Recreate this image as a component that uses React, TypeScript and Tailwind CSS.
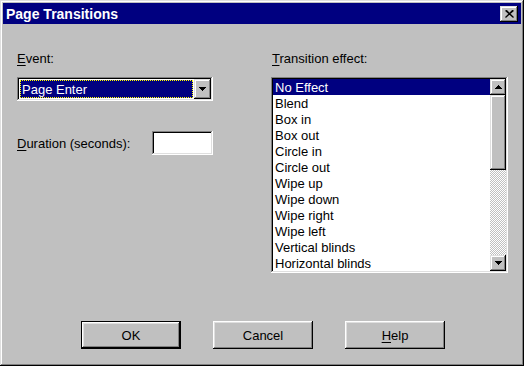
import { useState } from "react";

const raised =
  "shadow-[inset_-1px_-1px_#000,inset_1px_1px_#dfdfdf,inset_-2px_-2px_#808080,inset_2px_2px_#fff]";
const sunken =
  "shadow-[inset_-1px_-1px_#fff,inset_1px_1px_#808080,inset_-2px_-2px_#dfdfdf,inset_2px_2px_#000]";

const effects = [
  "No Effect",
  "Blend",
  "Box in",
  "Box out",
  "Circle in",
  "Circle out",
  "Wipe up",
  "Wipe down",
  "Wipe right",
  "Wipe left",
  "Vertical blinds",
  "Horizontal blinds",
];

function Arrow({ up }: { up?: boolean }) {
  return (
    <svg width="7" height="4" viewBox="0 0 7 4" className={up ? "rotate-180" : ""}>
      <path d="M0 0h7v1h-1v1h-1v1h-1v1h-1v-1h-1v-1h-1v-1h-1z" fill="#000" />
    </svg>
  );
}

function Btn({ children, primary }: { children: React.ReactNode; primary?: boolean }) {
  return (
    <button
      className={
        "w-[100px] h-[28px] bg-[#c0c0c0] text-[13px] text-black flex items-center justify-center " +
        (primary
          ? "border border-black shadow-[inset_-1px_-1px_#000,inset_1px_1px_#fff,inset_-2px_-2px_#808080,inset_2px_2px_#dfdfdf]"
          : "shadow-[inset_-1px_-1px_#000,inset_1px_1px_#fff,inset_-2px_-2px_#808080,inset_2px_2px_#dfdfdf]")
      }
    >
      {children}
    </button>
  );
}

export default function App() {
  const [selected, setSelected] = useState(0);

  return (
    <div
      className={
        "w-[524px] h-[366px] bg-[#c0c0c0] p-[3px] flex flex-col text-black font-['Liberation_Sans',Arial,sans-serif] select-none " +
        "shadow-[inset_-1px_-1px_#000,inset_1px_1px_#dfdfdf,inset_-2px_-2px_#808080,inset_2px_2px_#fff]"
      }
    >
      {/* title bar */}
      <div className="h-[21px] bg-[#000080] flex items-center justify-between pl-[3px] pr-[3px]">
        <span className="text-white font-bold text-[14px] leading-none">Page Transitions</span>
        <button className={"w-[18px] h-[16px] bg-[#c0c0c0] flex items-center justify-center " + raised}>
          <svg width="9" height="8" viewBox="0 0 9 8">
            <path d="M0.5 0.5l8 7M8.5 0.5l-8 7M1.5 0.5l7 7M7.5 0.5l-7 7" stroke="#000" strokeWidth="1.2" />
          </svg>
        </button>
      </div>

      {/* body */}
      <div className="flex flex-col pl-[14px] pt-[27px] text-[13px] leading-[15px]">
        <div className="flex">
          <div className="w-[196px] flex flex-col">
            <div className="h-[15px]">
              <span className="underline underline-offset-2">E</span>vent:
            </div>
            <div className={"mt-[11px] h-[24px] p-[2px] bg-white flex " + sunken}>
              <div className="flex-1 p-px">
                <div className="h-full bg-[#000080] text-white border border-dotted border-[#ffff00] pl-px flex items-center">
                  Page Enter
                </div>
              </div>
              <div className={"w-[17px] h-full bg-[#c0c0c0] flex items-center justify-center " + raised}>
                <Arrow />
              </div>
            </div>
            <div className="mt-[30px] flex items-center justify-between">
              <div>
                <span className="underline underline-offset-2">D</span>uration (seconds):
              </div>
              <div className={"w-[61px] h-[24px] bg-white " + sunken} />
            </div>
          </div>

          <div className="ml-[58px] w-[237px] flex flex-col">
            <div className="h-[15px] pl-px">
              <span className="underline underline-offset-2">T</span>ransition effect:
            </div>
            <div className={"mt-[11px] h-[196px] p-[2px] bg-white flex " + sunken}>
              <div className="flex-1 flex flex-col">
                {effects.map((e, i) => (
                  <div
                    key={e}
                    onClick={() => setSelected(i)}
                    className={
                      "h-[16px] pl-[2px] flex items-center " +
                      (i === selected ? "bg-[#000080] text-white" : "")
                    }
                  >
                    {e}
                  </div>
                ))}
              </div>
              <div className="w-[16px] flex flex-col">
                <div className={"h-[16px] bg-[#c0c0c0] flex items-center justify-center " + raised}>
                  <Arrow up />
                </div>
                <div className={"h-[75px] bg-[#c0c0c0] " + raised} />
                <div className="flex-1 bg-[repeating-conic-gradient(#c0c0c0_0%_25%,#fff_0%_50%)] bg-[length:2px_2px]" />
                <div className={"h-[16px] bg-[#c0c0c0] flex items-center justify-center " + raised}>
                  <Arrow />
                </div>
              </div>
            </div>
          </div>
        </div>

        <div className="mt-[48px] ml-[64px] flex gap-[32px]">
          <Btn primary>OK</Btn>
          <Btn>Cancel</Btn>
          <Btn>
            <span>
              <span className="underline underline-offset-2">H</span>elp
            </span>
          </Btn>
        </div>
      </div>
    </div>
  );
}
